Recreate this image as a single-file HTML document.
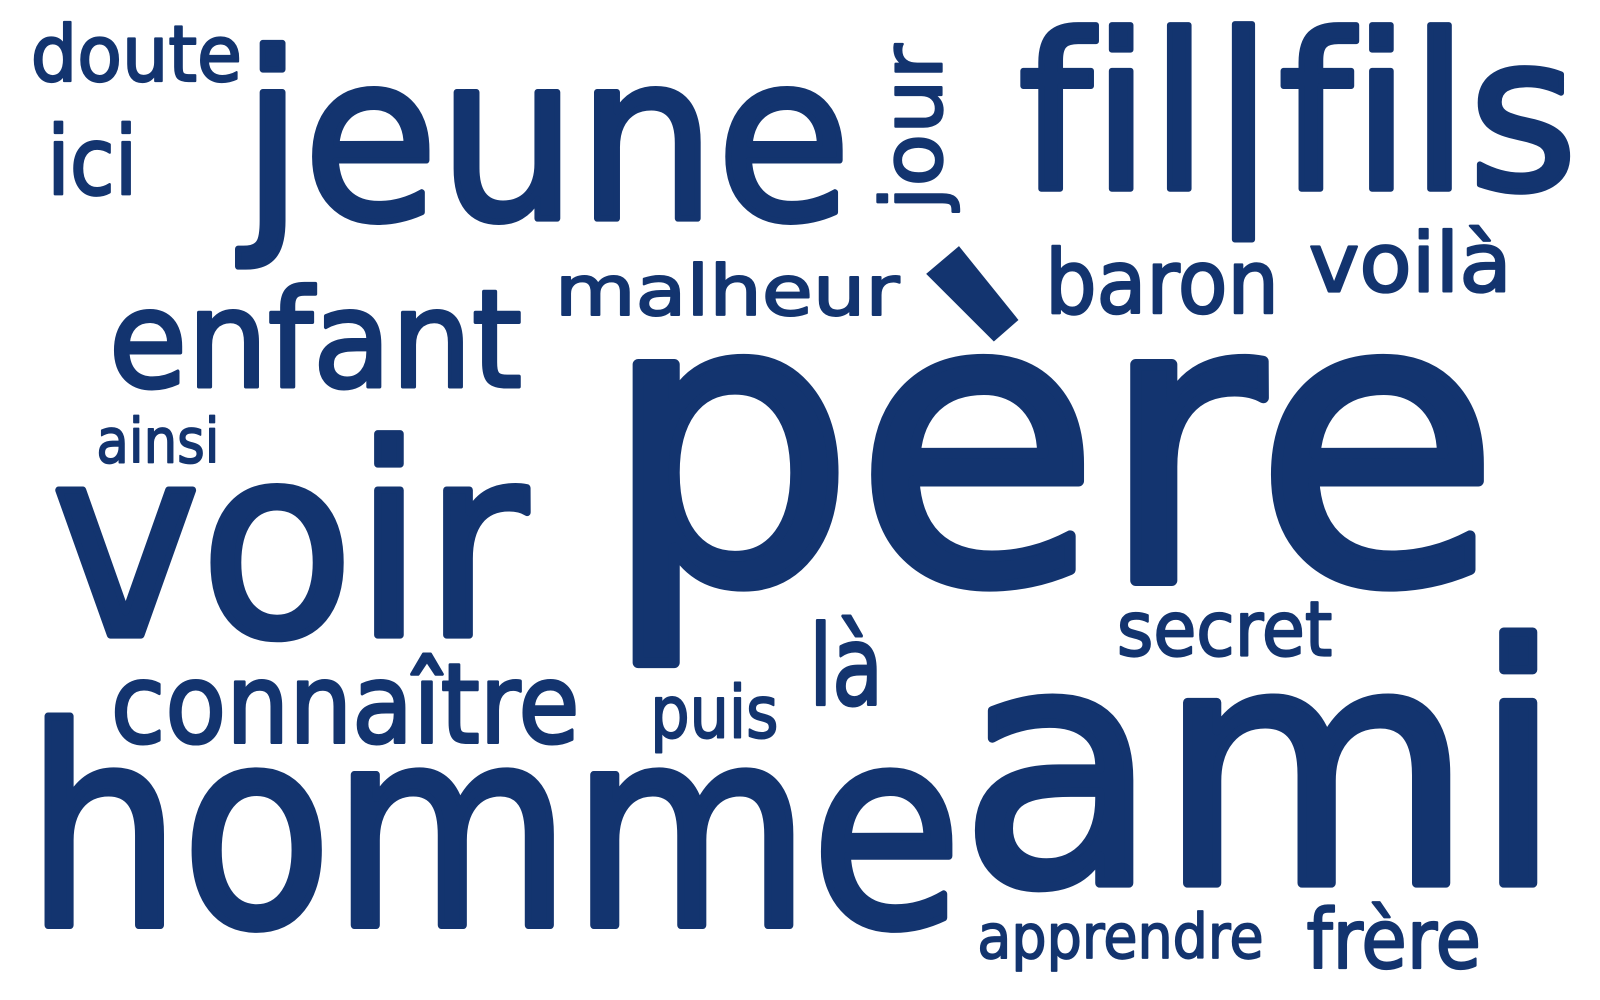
<!DOCTYPE html>
<html><head><meta charset="utf-8"><style>
html,body{margin:0;padding:0;background:#fff;}
svg{display:block}
text{font-family:"DejaVu Sans","Liberation Sans",sans-serif;font-weight:normal;fill:#13346f;stroke:#13346f;stroke-width:0.028em;stroke-linejoin:round;font-variant-ligatures:none;font-feature-settings:"liga" 0;}
</style></head><body>
<svg width="1600" height="1000" viewBox="0 0 1560 975" preserveAspectRatio="none" xmlns="http://www.w3.org/2000/svg">
<text x="30" y="79" font-size="76" textLength="206" lengthAdjust="spacingAndGlyphs">doute</text>
<text x="46" y="189" font-size="92" textLength="88" lengthAdjust="spacingAndGlyphs">ici</text>
<text x="236" y="213" font-size="225" textLength="594" lengthAdjust="spacingAndGlyphs">jeune</text>
<text transform="translate(918,205) rotate(-90)" font-size="82" textLength="162" lengthAdjust="spacingAndGlyphs">jour</text>
<text x="993" y="184" font-size="210" textLength="545" lengthAdjust="spacingAndGlyphs">fil|fils</text>
<text x="541" y="307" font-size="68" textLength="336" lengthAdjust="spacingAndGlyphs">malheur</text>
<polygon points="903,267 935,240 993,312 969,333" fill="#13346f"/>
<text x="1019" y="305" font-size="86" textLength="228" lengthAdjust="spacingAndGlyphs">baron</text>
<text x="1276" y="284" font-size="80" textLength="198" lengthAdjust="spacingAndGlyphs">voilà</text>
<text x="106" y="377" font-size="132" textLength="403" lengthAdjust="spacingAndGlyphs">enfant</text>
<text x="94" y="451" font-size="60" textLength="120" lengthAdjust="spacingAndGlyphs">ainsi</text>
<text x="50" y="619" font-size="258" textLength="464" lengthAdjust="spacingAndGlyphs">voir</text>
<text x="587" y="566" font-size="385" textLength="875" lengthAdjust="spacingAndGlyphs">pere</text>
<text x="789" y="687" font-size="108" textLength="72" lengthAdjust="spacingAndGlyphs">là</text>
<text x="1089" y="639" font-size="74" textLength="210" lengthAdjust="spacingAndGlyphs">secret</text>
<text x="108" y="724" font-size="108" textLength="457" lengthAdjust="spacingAndGlyphs">connaître</text>
<text x="634" y="719" font-size="70" textLength="125" lengthAdjust="spacingAndGlyphs">puis</text>
<text x="25" y="902" font-size="268" textLength="913" lengthAdjust="spacingAndGlyphs">homme</text>
<text x="936" y="861" font-size="322" textLength="588" lengthAdjust="spacingAndGlyphs">ami</text>
<text x="953" y="934" font-size="60" textLength="279" lengthAdjust="spacingAndGlyphs">apprendre</text>
<text x="1274" y="944" font-size="80" textLength="170" lengthAdjust="spacingAndGlyphs">frère</text>
</svg>
</body></html>
